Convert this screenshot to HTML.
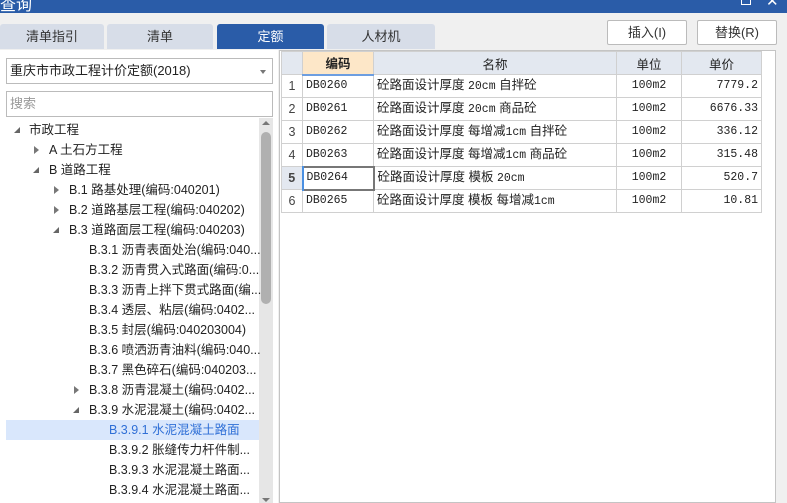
<!DOCTYPE html>
<html><head><meta charset="utf-8"><style>
*{margin:0;padding:0;box-sizing:border-box}
body{width:787px;height:503px;overflow:hidden;background:#f0f0f0;font-family:"Liberation Sans","Noto Sans CJK SC",sans-serif;font-size:12px;color:#222;position:relative}
.abs{position:absolute}
.title{left:0;top:0;width:787px;height:13px;background:#2a5ca8;overflow:hidden}
.tab{top:24px;height:25px;background:#d7dde8;border-radius:3px 3px 0 0;text-align:center;line-height:25px;font-size:13px;color:#333}
.tab.on{background:#2a5ca8;color:#fff}
.left{left:0;top:50px;width:278px;height:453px;background:#fff}
.box{background:#fff;border:1px solid #bbb}
.btn{top:20px;height:25px;background:#fff;border:1px solid #bbb;border-radius:2px;text-align:center;line-height:23px;font-size:13px;color:#333}
.tr{height:20px;line-height:20px;font-size:12.5px;white-space:nowrap;color:#222}
.arr{position:absolute;width:0;height:0}
.grid{left:279px;top:50px;width:497px;height:453px;background:#fff;border:1px solid #c4c4c4}
table{border-collapse:collapse;font-size:12.5px;position:absolute;left:1px;top:0}
td{border:1px solid #d0d0d0;height:23px;padding:0 3px;white-space:nowrap;vertical-align:middle;line-height:14px}
th{background:#e3e8f0;border:1px solid #d0d0d0;height:23px;font-weight:normal;font-size:12.5px}
.m{font-family:"Liberation Mono","Noto Sans CJK SC",monospace;font-size:11.5px}
.n{text-align:center;color:#444;background:#fff}
</style></head><body>
<div class="abs title"><span style="position:absolute;left:0;top:-9px;color:#fff;font-size:16px">查询</span><span style="position:absolute;left:741px;top:-5px;width:10px;height:10px;border:1.5px solid #fff"></span><span style="position:absolute;left:766px;top:-8px;color:#fff;font-size:15px">✕</span></div>
<div class="abs tab" style="left:0;width:104px">清单指引</div>
<div class="abs tab" style="left:107px;width:106px">清单</div>
<div class="abs tab on" style="left:217px;width:107px">定额</div>
<div class="abs tab" style="left:327px;width:108px">人材机</div>
<div class="abs btn" style="left:607px;width:80px">插入(I)</div>
<div class="abs btn" style="left:697px;width:80px">替换(R)</div>
<div class="abs left"></div>
<div class="abs box" style="left:6px;top:58px;width:267px;height:26px;line-height:24px;padding-left:3px;font-size:13px">重庆市市政工程计价定额(2018)<span style="position:absolute;right:6px;top:11px;border:3px solid transparent;border-top:4px solid #777"></span></div>
<div class="abs box" style="left:6px;top:91px;width:267px;height:26px;line-height:24px;padding-left:3px;font-size:13px;color:#999">搜索</div>
<div class="abs" style="left:259px;top:118px;width:14px;height:385px;background:#e6e6e6"></div>
<div class="abs" style="left:261px;top:132px;width:10px;height:172px;background:#b0b0b0;border-radius:5px"></div>
<div class="abs" style="left:262px;top:121px;border:4px solid transparent;border-bottom:4px solid #777;border-top:0"></div>
<div class="abs" style="left:262px;top:498px;border:4px solid transparent;border-top:4px solid #777;border-bottom:0"></div>
<div class="abs" style="left:6px;top:420px;width:253px;height:20px;background:#d9e7fc"></div>
<div class="abs" style="left:0;top:120px;width:258px">
<div class="tr" style="padding-left:29px;position:relative"><span class="arr" style="left:14px;top:7px;border-left:6px solid transparent;border-bottom:6px solid #666"></span>市政工程</div>
<div class="tr" style="padding-left:49px;position:relative"><span class="arr" style="left:34px;top:6px;border:4px solid transparent;border-left:5px solid #777"></span>A 土石方工程</div>
<div class="tr" style="padding-left:49px;position:relative"><span class="arr" style="left:33px;top:7px;border-left:6px solid transparent;border-bottom:6px solid #666"></span>B 道路工程</div>
<div class="tr" style="padding-left:69px;position:relative"><span class="arr" style="left:54px;top:6px;border:4px solid transparent;border-left:5px solid #777"></span>B.1 路基处理(编码:040201)</div>
<div class="tr" style="padding-left:69px;position:relative"><span class="arr" style="left:54px;top:6px;border:4px solid transparent;border-left:5px solid #777"></span>B.2 道路基层工程(编码:040202)</div>
<div class="tr" style="padding-left:69px;position:relative"><span class="arr" style="left:53px;top:7px;border-left:6px solid transparent;border-bottom:6px solid #666"></span>B.3 道路面层工程(编码:040203)</div>
<div class="tr" style="padding-left:89px">B.3.1 沥青表面处治(编码:040...</div>
<div class="tr" style="padding-left:89px">B.3.2 沥青贯入式路面(编码:0...</div>
<div class="tr" style="padding-left:89px">B.3.3 沥青上拌下贯式路面(编...</div>
<div class="tr" style="padding-left:89px">B.3.4 透层、粘层(编码:0402...</div>
<div class="tr" style="padding-left:89px">B.3.5 封层(编码:040203004)</div>
<div class="tr" style="padding-left:89px">B.3.6 喷洒沥青油料(编码:040...</div>
<div class="tr" style="padding-left:89px">B.3.7 黑色碎石(编码:040203...</div>
<div class="tr" style="padding-left:89px;position:relative"><span class="arr" style="left:74px;top:6px;border:4px solid transparent;border-left:5px solid #777"></span>B.3.8 沥青混凝土(编码:0402...</div>
<div class="tr" style="padding-left:89px;position:relative"><span class="arr" style="left:73px;top:7px;border-left:6px solid transparent;border-bottom:6px solid #666"></span>B.3.9 水泥混凝土(编码:0402...</div>
<div class="tr" style="padding-left:109px;color:#2f6fd6">B.3.9.1 水泥混凝土路面</div>
<div class="tr" style="padding-left:109px">B.3.9.2 胀缝传力杆件制...</div>
<div class="tr" style="padding-left:109px">B.3.9.3 水泥混凝土路面...</div>
<div class="tr" style="padding-left:109px">B.3.9.4 水泥混凝土路面...</div>
</div>
<div class="abs grid">
<table>
<tr><th style="width:21px"></th><th style="width:71px;background:#fde7c8;font-weight:bold;border-bottom:2px solid #6d9ee0">编码</th><th style="width:243px">名称</th><th style="width:65px">单位</th><th style="width:80px">单价</th></tr>
<tr><td class="n">1</td><td class="m">DB0260</td><td>砼路面设计厚度 <span class="m">20cm</span> 自拌砼</td><td class="m" style="text-align:center">100m2</td><td class="m" style="text-align:right">7779.2</td></tr>
<tr><td class="n">2</td><td class="m">DB0261</td><td>砼路面设计厚度 <span class="m">20cm</span> 商品砼</td><td class="m" style="text-align:center">100m2</td><td class="m" style="text-align:right">6676.33</td></tr>
<tr><td class="n">3</td><td class="m">DB0262</td><td>砼路面设计厚度 每增减<span class="m">1cm</span> 自拌砼</td><td class="m" style="text-align:center">100m2</td><td class="m" style="text-align:right">336.12</td></tr>
<tr><td class="n">4</td><td class="m">DB0263</td><td>砼路面设计厚度 每增减<span class="m">1cm</span> 商品砼</td><td class="m" style="text-align:center">100m2</td><td class="m" style="text-align:right">315.48</td></tr>
<tr><td class="n" style="background:#e3e8f0;font-weight:bold;border-right:2px solid #4a90e2">5</td><td class="m" style="border:2px solid #777">DB0264</td><td>砼路面设计厚度 模板 <span class="m">20cm</span></td><td class="m" style="text-align:center">100m2</td><td class="m" style="text-align:right">520.7</td></tr>
<tr><td class="n">6</td><td class="m">DB0265</td><td>砼路面设计厚度 模板 每增减<span class="m">1cm</span></td><td class="m" style="text-align:center">100m2</td><td class="m" style="text-align:right">10.81</td></tr>
</table>
</div>
</body></html>
